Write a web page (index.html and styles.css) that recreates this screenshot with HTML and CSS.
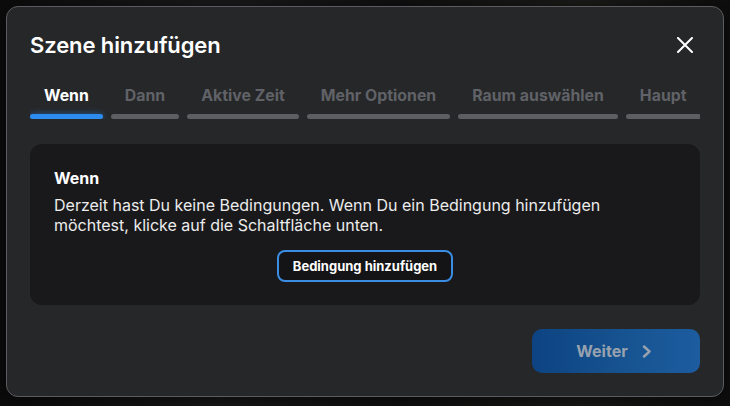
FILE: index.html
```html
<!DOCTYPE html>
<html lang="de">
<head>
<meta charset="utf-8">
<title>Szene hinzufügen</title>
<link rel="stylesheet" href="styles.css">
</head>
<body>
<div class="backdrop">
  <div class="dialog">
    <div class="header">
      <h1 class="title">Szene hinzufügen</h1>
      <button class="close" aria-label="Schließen">
        <svg width="16" height="16" viewBox="0 0 16 16"><path d="M1 1 L15 15 M15 1 L1 15" stroke="#fff" stroke-width="2" stroke-linecap="round"/></svg>
      </button>
    </div>
    <div class="tabs">
      <div class="tab active"><span class="tab-label">Wenn</span><span class="bar"></span></div>
      <div class="tab"><span class="tab-label">Dann</span><span class="bar"></span></div>
      <div class="tab"><span class="tab-label">Aktive Zeit</span><span class="bar"></span></div>
      <div class="tab"><span class="tab-label">Mehr Optionen</span><span class="bar"></span></div>
      <div class="tab"><span class="tab-label">Raum auswählen</span><span class="bar"></span></div>
      <div class="tab"><span class="tab-label">Haupt</span><span class="bar"></span></div>
    </div>
    <div class="card">
      <div class="card-title">Wenn</div>
      <p class="card-text">Derzeit hast Du keine Bedingungen. Wenn Du ein Bedingung hinzufügen möchtest, klicke auf die Schaltfläche unten.</p>
      <div class="card-actions">
        <button class="outline-btn">Bedingung hinzufügen</button>
      </div>
    </div>
    <div class="footer">
      <button class="next-btn">Weiter
        <svg width="10" height="13" viewBox="0 0 10 13"><path d="M2 1.5 L7.5 6.5 L2 11.5" fill="none" stroke="#98a2af" stroke-width="2.4" stroke-linecap="round" stroke-linejoin="round"/></svg>
      </button>
    </div>
  </div>
</div>
</body>
</html>
```
FILE: styles.css
```css
* { box-sizing: border-box; }
html, body { margin: 0; padding: 0; }
body {
  background: #121212;
  font-family: Inter, "Noto Sans", "Liberation Sans", sans-serif;
  color: #fff;
  width: 730px;
  height: 406px;
  overflow: hidden;
}
.backdrop {
  padding: 6px;
  background: linear-gradient(90deg, #0c0c0c 0%, #1a1a1a 30%, #101010 55%, #1b1b19 80%, #0e0e0e 100%);
  height: 406px;
}
.dialog {
  width: 718px;
  background: #262729;
  border: 1px solid #5b5c5f;
  border-radius: 12px;
  padding: 24px 23px 23px;
  box-shadow: 0 4px 20px rgba(0,0,0,0.6);
}
.header {
  display: flex;
  align-items: center;
  justify-content: space-between;
  height: 28px;
}
.title {
  margin: 0;
  font-size: 22px;
  line-height: 28px;
  font-weight: 600;
  color: #fff;
  letter-spacing: -0.1px;
}
.close {
  background: none;
  border: 0;
  padding: 0;
  margin-right: 7px;
  width: 16px;
  height: 16px;
  display: flex;
}
.tabs {
  margin-top: 27px;
  display: flex;
  gap: 8px;
  overflow: hidden;
  width: 670px;
}
.tab {
  display: flex;
  flex-direction: column;
  flex: none;
}
.tab-label {
  font-size: 15.85px;
  line-height: 20px;
  font-weight: 700;
  color: #606267;
  padding: 0 14px;
  white-space: nowrap;
  text-align: center;
}
.tab.active .tab-label { color: #fff; }
.bar {
  margin-top: 8px;
  height: 5px;
  border-radius: 3px;
  background: #5c5e62;
}
.tab.active .bar {
  background: #2d8cf0;
  box-shadow: 0 0 6px rgba(45,140,240,0.55);
}
.card {
  margin-top: 25px;
  background: #19191b;
  border-radius: 12px;
  padding: 24px 24px 23px;
}
.card-title {
  font-size: 16px;
  line-height: 20px;
  font-weight: 700;
  color: #fff;
}
.card-text {
  margin: 7px 0 0;
  font-size: 16px;
  line-height: 20px;
  font-weight: 400;
  color: #ececec;
}
.card-actions {
  margin-top: 14.5px;
  display: flex;
  justify-content: center;
}
.outline-btn {
  width: 176px;
  height: 32px;
  border: 2px solid #3a8de2;
  border-radius: 8px;
  background: #141416;
  color: #fff;
  font-family: inherit;
  font-size: 13px;
  font-weight: 700;
  padding: 0;
}
.footer {
  margin-top: 24.5px;
  display: flex;
  justify-content: flex-end;
}
.next-btn {
  width: 168px;
  height: 44px;
  border: 0;
  border-radius: 10px;
  background: linear-gradient(90deg, #0d4382 0%, #16528f 50%, #1c5c9f 100%);
  color: #98a2af;
  font-family: inherit;
  font-size: 16px;
  font-weight: 700;
  display: flex;
  align-items: center;
  justify-content: center;
  gap: 14px;
  padding: 0 4px 0 0;
}
```
